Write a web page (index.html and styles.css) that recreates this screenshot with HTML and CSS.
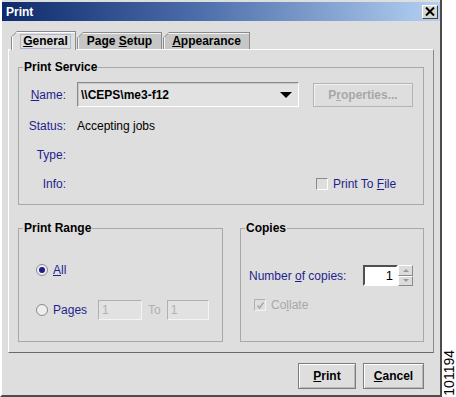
FILE: index.html
```html
<!DOCTYPE html>
<html lang="en">
<head>
    <meta charset="UTF-8">
    <title>Print</title>
    <link rel="stylesheet" href="styles.css">
</head>
<body>
    <div class="page">
        <div class="dialog">
            <div class="titlebar">
                <span class="title">Print</span>
                <span class="close">
                    <svg width="10" height="9" viewBox="0 0 10 9"><path d="M1 0.5 L9 8.5 M9 0.5 L1 8.5" stroke="#000" stroke-width="2"/></svg>
                </span>
            </div>

            <div class="tabs">
                <div class="tab selected"><span class="tab_in"><span class="focus"><u>G</u>eneral</span></span></div>
                <div class="tab tab_page"><span class="tab_in"><span>Page <u>S</u>etup</span></span></div>
                <div class="tab tab_look"><span class="tab_in"><span><u>A</u>ppearance</span></span></div>
            </div>

            <div class="panel">
                <fieldset class="group">
                    <legend>Print Service</legend>
                    <div class="service">
                        <span class="lbl"><u>N</u>ame:</span>
                        <div class="combo"><span>\\CEPS\me3-f12</span><span class="arrow"></span></div>
                        <button class="btn disabled">P<u>r</u>operties...</button>

                        <span class="lbl">Status:</span>
                        <span class="value">Accepting jobs</span>
                        <span></span>

                        <span class="lbl">Type:</span>
                        <span></span>
                        <span></span>

                        <span class="lbl">Info:</span>
                        <span></span>
                        <span class="check file"><span class="box"></span><span class="navy">Print To <u>F</u>ile</span></span>
                    </div>
                </fieldset>

                <div class="lower">
                    <fieldset class="group range">
                        <legend>Print Range</legend>
                        <div class="range_body">
                            <div class="opt"><span class="radio on"></span><span class="navy"><u>A</u>ll</span></div>
                            <div class="opt">
                                <span class="radio"></span><span class="navy pages">Pa<u>g</u>es</span>
                                <span class="field">1</span>
                                <span class="to">To</span>
                                <span class="field short">1</span>
                            </div>
                        </div>
                    </fieldset>

                    <fieldset class="group copies">
                        <legend>Copies</legend>
                        <div class="copies_body">
                            <div class="opt tall">
                                <span class="navy num">Number <u>o</u>f copies:</span>
                                <span class="spinner">
                                    <span class="spin_field">1</span>
                                    <span class="spin_btns">
                                        <span class="spin_btn"><span class="up"></span></span>
                                        <span class="spin_btn"><span class="down"></span></span>
                                    </span>
                                </span>
                            </div>
                            <div class="check collate">
                                <span class="box">
                                    <svg width="9" height="9" viewBox="0 0 9 9"><path d="M1.5 4.5 L3.5 7 L7.5 1.5" stroke="#a8a8a8" stroke-width="1.6" fill="none"/></svg>
                                </span>
                                <span class="muted">Co<u>l</u>late</span>
                            </div>
                        </div>
                    </fieldset>
                </div>
            </div>

            <div class="footer">
                <button class="btn act print"><u>P</u>rint</button>
                <button class="btn act cancel"><u>C</u>ancel</button>
            </div>
        </div>
        <div class="strip"><span class="fig">101194</span></div>
    </div>
</body>
</html>
```

FILE: styles.css
```css
body { margin: 0; background: #fff; font-family: "Liberation Sans", Arial, sans-serif; font-size: 12px; color: #000; }
u { text-decoration: underline; text-underline-offset: 1px; }
.page { display: flex; width: 456px; height: 397px; }

/* window frame */
.dialog { width: 438px; height: 395px; background: #dedede; border-left: 2px solid #fff; border-right: 2px solid #4c4c4c; border-bottom: 2px solid #4c4c4c; display: flex; flex-direction: column; }
.titlebar { margin-top: 2px; height: 19px; display: flex; align-items: center; justify-content: space-between; padding: 0 2px; background: linear-gradient(to right, #0e2a6c, #4c6eaa 45%, #b4d0f2); }
.title { color: #fff; font-weight: 700; padding-left: 2px; }
.close { width: 16px; height: 14px; box-sizing: border-box; display: flex; align-items: center; justify-content: center; background: #d8d6d0; border: 1px solid; border-color: #fff #404040 #404040 #fff; }

/* tabs */
.tabs { margin-top: 11px; height: 17px; padding-left: 9px; display: flex; align-items: flex-end; gap: 1px; }
.tab { height: 17px; box-sizing: border-box; padding: 1px 1px 0 1px; background: #8a8a8a; clip-path: polygon(6px 0, 100% 0, 100% 100%, 0 100%, 0 6px); font-weight: 700; }
.tab_in { height: 100%; display: flex; align-items: center; justify-content: center; background: #c6c6c6; box-shadow: inset 1px 1px #f4f4f4; clip-path: polygon(5px 0, 100% 0, 100% 100%, 0 100%, 0 5px); }
.tab.selected { width: 65px; height: 19px; margin-bottom: -1px; position: relative; z-index: 1; }
.tab.selected .tab_in { background: #dedede; box-shadow: inset 1px 1px #fff; }
.tab_page { width: 85px; }
.tab_look { width: 87px; }
.focus { border: 1px solid #b4b4cc; padding: 0 2px; line-height: 13px; margin-left: 4px; }

/* content */
.panel { margin-left: 6px; width: 426px; height: 304px; box-sizing: border-box; border: 1px solid; border-color: #fff #8a8a8a #6a6a6a #fff; padding: 10px 9px 0 9px; }
.group { margin: 0; padding: 0; border: 1px solid #a8a8a8; min-width: 0; }
.group legend { margin-left: 4px; padding: 0 1px; font-weight: 700; line-height: 14px; }
.navy, .lbl { color: #1e1e8c; }
.muted { color: #a8a8a8; }

.service { display: grid; grid-template-columns: 49px 236px 100px; grid-template-rows: 25px 20px 20px 20px; row-gap: 9px; align-items: center; padding: 8px 0 10px 9px; }
.lbl { text-align: right; padding-right: 11px; }
.combo { width: 222px; height: 25px; box-sizing: border-box; display: flex; align-items: center; justify-content: space-between; padding: 0 6px 0 3px; border: 1px solid; border-color: #8a8a8a #fff #fff #8a8a8a; box-shadow: inset 1px 1px #c8c8c8; background: #e2e2e2; font-weight: 700; }
.arrow { width: 0; height: 0; border-left: 6px solid transparent; border-right: 6px solid transparent; border-top: 6px solid #000; }

.btn { font-family: "Liberation Sans", Arial, sans-serif; font-size: 12px; font-weight: 700; background: #dedede; padding: 0; cursor: pointer; }
.btn.disabled { width: 100px; height: 24px; justify-self: start; margin-top: 1px; color: #a8a8a8; border: 1px solid #b4b4b4; box-shadow: inset 1px 1px #f2f2f2; }

.check { display: flex; align-items: center; gap: 5px; }
.check .box { width: 12px; height: 12px; box-sizing: border-box; border: 1px solid; border-color: #8a8a8a #fff #fff #8a8a8a; background: #dedede; display: flex; align-items: center; justify-content: center; }
.file { margin-left: 3px; }

.lower { display: flex; gap: 17px; margin-top: 16px; }
.range { width: 205px; box-sizing: border-box; }
.copies { width: 184px; box-sizing: border-box; }
.range_body { height: 106px; box-sizing: border-box; padding: 27px 0 0 17px; display: flex; flex-direction: column; gap: 22px; }
.opt { display: flex; align-items: center; height: 16px; }
.opt + .opt { height: 20px; }
.radio { width: 12px; height: 12px; box-sizing: border-box; border-radius: 50%; border: 1px solid #8a8a8a; background: #eeeeee; margin-right: 5px; display: flex; align-items: center; justify-content: center; }
.radio.on::after { content: ""; width: 6px; height: 6px; border-radius: 50%; background: #1e1e8c; }
.pages { width: 45px; }
.field { width: 44px; height: 20px; box-sizing: border-box; border: 1px solid; border-color: #b0b0b0 #f4f4f4 #f4f4f4 #b0b0b0; background: #e2e2e2; color: #b0b0b0; padding-left: 3px; line-height: 18px; }
.field.short { width: 42px; }
.to { color: #b0b0b0; margin: 0 6px; }

.copies_body { height: 106px; box-sizing: border-box; padding: 30px 0 0 8px; }
.opt.tall { height: 21px; }
.num { width: 114px; }
.spinner { display: flex; width: 50px; height: 21px; }
.spin_field { width: 35px; box-sizing: border-box; border: 2px solid; border-color: #505050 #fff #fff #505050; background: #fff; text-align: right; padding-right: 3px; font-size: 13px; line-height: 17px; }
.spin_btns { width: 15px; display: flex; flex-direction: column; }
.spin_btn { flex: 1; border: 1px solid; border-color: #fff #8a8a8a #8a8a8a #fff; background: #dcdcdc; display: flex; align-items: center; justify-content: center; }
.up { border-left: 3px solid transparent; border-right: 3px solid transparent; border-bottom: 3px solid #9a9a9a; }
.down { border-left: 3px solid transparent; border-right: 3px solid transparent; border-top: 3px solid #9a9a9a; }
.collate { margin-top: 12px; margin-left: 5px; height: 14px; }
.collate .box { border-color: #b0b0b0 #f4f4f4 #f4f4f4 #b0b0b0; }

.footer { display: flex; justify-content: flex-end; gap: 7px; padding: 10px 16px 0 0; }
.btn.act { height: 26px; border: 1px solid #7c7c7c; box-shadow: inset 1px 1px #fff, inset -1px -1px #b8b8b8; }
.print { width: 58px; }
.cancel { width: 61px; }

/* figure number */
.strip { flex: 1; display: flex; align-items: flex-end; justify-content: center; padding-bottom: 1px; }
.fig { writing-mode: vertical-rl; transform: rotate(180deg); font-size: 14px; line-height: 12px; }
```
